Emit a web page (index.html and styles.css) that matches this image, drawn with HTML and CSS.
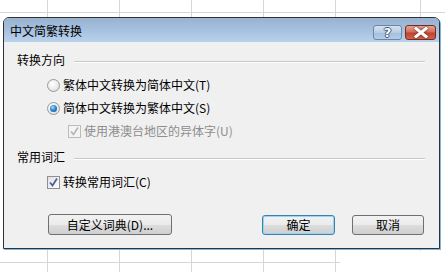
FILE: index.html
```html
<!DOCTYPE html>
<html>
<head>
<meta charset="utf-8">
<link rel="stylesheet" href="styles.css">
</head>
<body>
<div class="dialog">
  <div class="titlebar">
    <span class="title">中文简繁转换</span>
    <div class="caption-btns">
      <div class="cbtn help">?</div>
      <div class="cbtn close">
        <svg width="16" height="11" viewBox="0 0 16 11"><path d="M3 1.5 L13 9.5 M13 1.5 L3 9.5" stroke="#fff" stroke-width="3" stroke-linecap="square"/></svg>
      </div>
    </div>
  </div>
  <div class="content">
    <div class="group-head"><span>转换方向</span><div class="rule"></div></div>
    <div class="opt"><span class="radio"></span><span>繁体中文转换为简体中文(T)</span></div>
    <div class="opt"><span class="radio on"></span><span>简体中文转换为繁体中文(S)</span></div>
    <div class="opt sub disabled"><span class="check gray"><svg width="11" height="11" viewBox="0 0 11 11"><path d="M2 5.5 L4.5 8.5 L9 1.5" fill="none" stroke="#b4b4b4" stroke-width="1.6"/></svg></span><span>使用港澳台地区的异体字(U)</span></div>
    <div class="group-head second"><span>常用词汇</span><div class="rule"></div></div>
    <div class="opt"><span class="check"><svg width="11" height="11" viewBox="0 0 11 11"><path d="M2 5.5 L4.5 8.5 L9 1.5" fill="none" stroke="#4b5f9e" stroke-width="1.8"/></svg></span><span>转换常用词汇(C)</span></div>
    <div class="btn-row">
      <div class="btn custom">自定义词典(D)...</div>
      <div class="spacer"></div>
      <div class="btn ok">确定</div>
      <div class="btn cancel">取消</div>
    </div>
  </div>
</div>
<div class="patch"></div>
</body>
</html>
```
FILE: styles.css
```css
html, body {
  margin: 0;
  padding: 0;
}
body {
  width: 445px;
  height: 272px;
  overflow: hidden;
  position: relative;
  font-family: "Noto Sans CJK SC", "Liberation Sans", sans-serif;
  font-size: 12px;
  color: #000;
  background-color: #fff;
  background-image:
    repeating-linear-gradient(to right, transparent 0 47px, #d6d6d6 47px 48px, transparent 48px 72px),
    linear-gradient(to bottom, transparent 0 12px, #d6d6d6 12px 13px, transparent 13px 262px, #d6d6d6 262px 263px, transparent 263px);
  background-position: -72px 0, 0 0;
}
.dialog {
  margin: 17px 0 0 3px;
  width: 435px;
  border: 1px solid #2f3338;
  border-radius: 6px 6px 0 0;
  background: #f0f0f0;
  box-shadow: 1px 1px 0 #7fb6dc;
  overflow: hidden;
}
.titlebar {
  height: 24px;
  display: flex;
  align-items: center;
  justify-content: space-between;
  padding: 0 3px 0 6px;
  background: linear-gradient(to bottom, #98b2d0 0%, #a9c3e2 60%, #b9d2ec 100%);
}
.title {
  color: #000;
  font-size: 12px;
  line-height: 14px;
  margin-top: 1px;
}
.caption-btns {
  display: flex;
  gap: 3px;
  margin-top: 4px;
}
.cbtn {
  height: 15px;
  border-radius: 3px;
  display: flex;
  align-items: center;
  justify-content: center;
  box-sizing: border-box;
}
.help {
  width: 29px;
  border: 1px solid #6c86a6;
  background: linear-gradient(to bottom, #d4e2f1 0%, #b9cde4 50%, #a5bfdc 51%, #b5cce6 100%);
  color: #fff;
  font-family: "DejaVu Sans", sans-serif;
  font-weight: bold;
  font-size: 13px;
  line-height: 13px;
  text-shadow: 1px 0 0 #3d5878, -1px 0 0 #3d5878, 0 1px 0 #3d5878, 0 -1px 0 #3d5878;
}
.close {
  width: 31px;
  border: 1px solid #7a2c26;
  background: linear-gradient(to bottom, #e3a394 0%, #d46b57 48%, #c2412b 52%, #d0634c 100%);
}
.close svg {
  filter: drop-shadow(0 0 1px #5a1a12);
}
.content {
  padding: 9px 14px 13px 13px;
  display: flex;
  flex-direction: column;
}
.group-head {
  height: 18px;
  display: flex;
  align-items: center;
  gap: 9px;
  line-height: 18px;
}
.group-head.second {
  margin-top: 8px;
}
.rule {
  flex: 1;
  height: 0;
  border-top: 1px solid #c8c8c8;
  border-bottom: 1px solid #fff;
  margin-top: 3px;
}
.opt {
  height: 18px;
  display: flex;
  align-items: center;
  gap: 3px;
  padding-left: 30px;
  line-height: 18px;
  margin-top: 5px;
}
.group-head + .opt {
  margin-top: 7px;
}
.opt.sub {
  padding-left: 51px;
}
.opt.disabled {
  color: #8d8d8d;
}
.radio {
  width: 13px;
  height: 13px;
  box-sizing: border-box;
  border-radius: 50%;
  border: 1px solid #9a9a9a;
  background: radial-gradient(circle at 40% 35%, #ffffff 0%, #e8e8e8 60%, #d2d2d2 100%);
  display: flex;
  align-items: center;
  justify-content: center;
}
.radio.on::after {
  content: "";
  width: 7px;
  height: 7px;
  border-radius: 50%;
  background: radial-gradient(circle at 40% 35%, #a8e0ff 0%, #2a8ad4 45%, #13467f 100%);
}
.check {
  width: 13px;
  height: 13px;
  box-sizing: border-box;
  border: 1px solid #8e8f8f;
  background: linear-gradient(135deg, #e0e0e0 0%, #ffffff 100%);
  display: flex;
  align-items: center;
  justify-content: center;
}
.check.gray {
  border-color: #bcbcbc;
  background: #f4f4f4;
}
.btn-row {
  display: flex;
  align-items: flex-start;
  margin-top: 23px;
  padding-left: 31px;
  padding-right: 1px;
}
.spacer {
  flex: 1;
}
.btn {
  box-sizing: border-box;
  height: 21px;
  border: 1px solid #707070;
  border-radius: 3px;
  background: linear-gradient(to bottom, #f2f2f2 0%, #ebebeb 50%, #dddddd 51%, #cfcfcf 100%);
  display: flex;
  align-items: center;
  justify-content: center;
  line-height: 18px;
}
.custom {
  width: 124px;
}
.ok {
  width: 73px;
  margin-top: 1px;
  height: 20px;
  border-color: #3c7fb1;
  box-shadow: inset 0 0 0 1px #98d5f1;
}
.cancel {
  width: 72px;
  margin-left: 17px;
  margin-top: 1px;
  height: 20px;
}
.patch {
  position: absolute;
  left: 340px;
  top: 251px;
  width: 105px;
  height: 21px;
  background: #fff;
}
```
